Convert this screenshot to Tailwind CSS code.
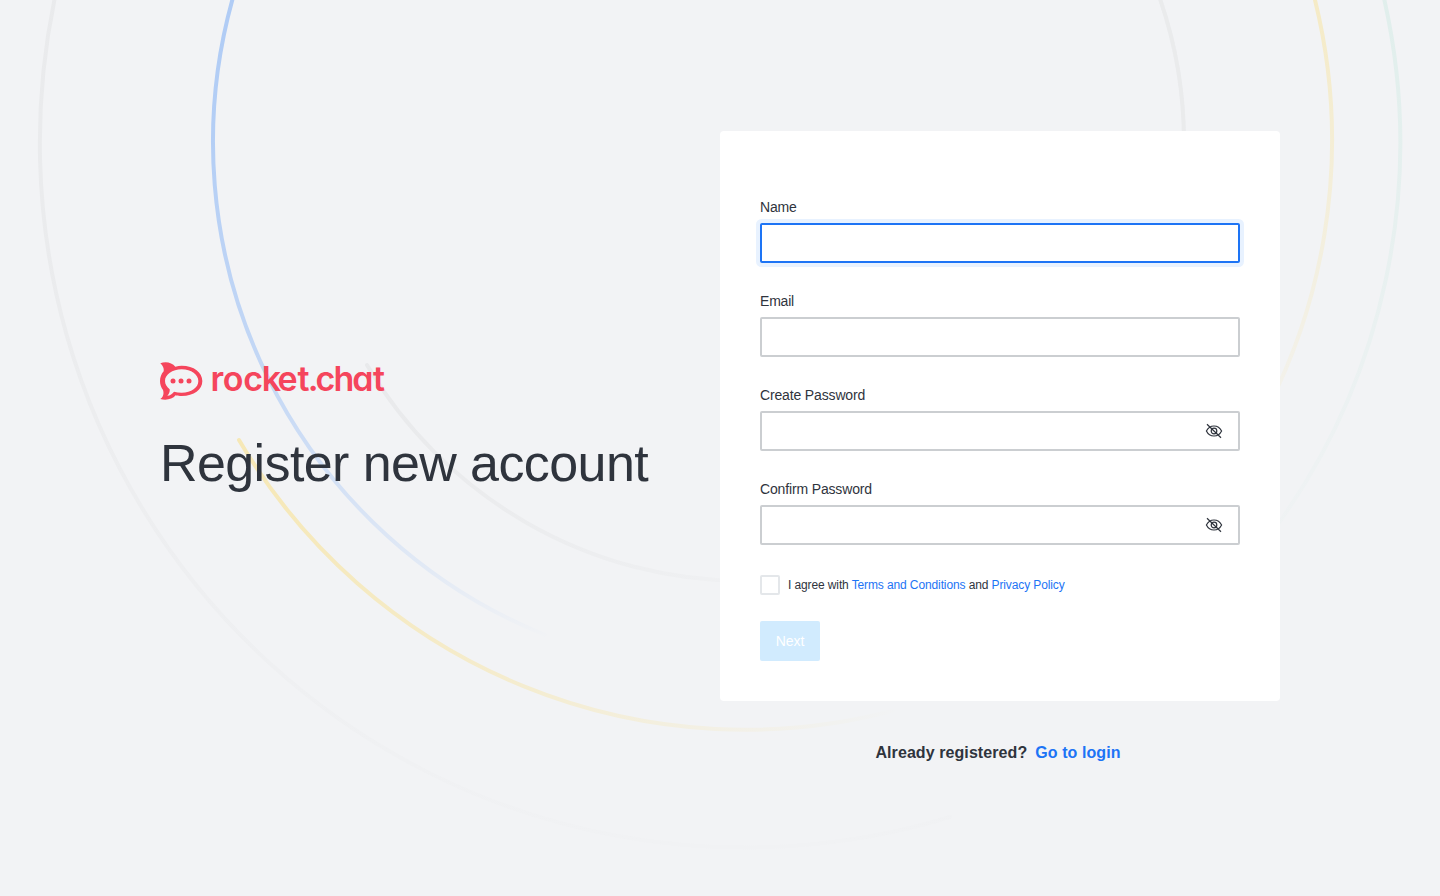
<!DOCTYPE html>
<html lang="en">
<head>
<meta charset="utf-8">
<title>Register new account</title>
<script src="https://cdn.jsdelivr.net/npm/@tailwindcss/browser@4"></script>
</head>
<body class="relative h-[896px] w-[1440px] overflow-hidden bg-[#f2f3f5] font-['Nimbus_Sans','Helvetica','Liberation_Sans',sans-serif] text-[#2f343d]">
<svg class="absolute inset-0" width="1440" height="896" viewBox="0 0 1440 896" fill="none" stroke-width="4" stroke-linecap="round">
  <defs>
    <linearGradient id="outer" gradientUnits="userSpaceOnUse" x1="0" y1="0" x2="0" y2="860"><stop stop-color="#9e9e9e" stop-opacity=".1"/><stop offset=".3" stop-color="#9e9e9e" stop-opacity=".09"/><stop offset="1" stop-color="#9e9e9e" stop-opacity=".01"/></linearGradient>
    <linearGradient id="blue" gradientUnits="userSpaceOnUse" x1="0" y1="0" x2="0" y2="640"><stop stop-color="#1d74f5" stop-opacity=".31"/><stop offset=".22" stop-color="#1d74f5" stop-opacity=".29"/><stop offset=".57" stop-color="#1d74f5" stop-opacity=".22"/><stop offset=".7" stop-color="#1d74f5" stop-opacity=".17"/><stop offset=".88" stop-color="#1d74f5" stop-opacity=".08"/><stop offset="1" stop-color="#1d74f5" stop-opacity="0"/></linearGradient>
    <linearGradient id="yellowLeft" gradientUnits="userSpaceOnUse" x1="239" y1="0" x2="900" y2="0"><stop stop-color="#ffd031" stop-opacity=".32"/><stop offset=".4" stop-color="#ffd031" stop-opacity=".2"/><stop offset=".75" stop-color="#ffd031" stop-opacity=".07"/><stop offset="1" stop-color="#ffd031" stop-opacity="0"/></linearGradient>
    <linearGradient id="yellowRight" gradientUnits="userSpaceOnUse" x1="0" y1="0" x2="0" y2="440"><stop stop-color="#ffd031" stop-opacity=".24"/><stop offset=".4" stop-color="#ffd031" stop-opacity=".145"/><stop offset="1" stop-color="#ffd031" stop-opacity=".03"/></linearGradient>
    <linearGradient id="green" gradientUnits="userSpaceOnUse" x1="0" y1="0" x2="0" y2="540"><stop stop-color="#2dc08f" stop-opacity=".09"/><stop offset=".8" stop-color="#2dc08f" stop-opacity=".025"/><stop offset="1" stop-color="#2dc08f" stop-opacity=".01"/></linearGradient>
    <linearGradient id="inner" gradientUnits="userSpaceOnUse" x1="367" y1="0" x2="820" y2="0"><stop stop-color="#9e9e9e" stop-opacity=".11"/><stop offset="1" stop-color="#9e9e9e" stop-opacity=".01"/></linearGradient>
  </defs>
  <path d="M54.4 0A705 705 0 0 0 950 817" stroke="url(#outer)"/>
  <path d="M232.3 0A532 532 0 0 0 545 635" stroke="url(#blue)"/>
  <path d="M239 440A587.5 587.5 0 0 0 900 709" stroke="url(#yellowLeft)"/>
  <path d="M1315 0A587.5 587.5 0 0 1 1240 456" stroke="url(#yellowRight)"/>
  <path d="M1384.4 0A655 655 0 0 1 1270 535" stroke="url(#green)"/>
  <path d="M367 365A439 439 0 0 0 745 581" stroke="url(#inner)"/>
  <path d="M1160.4 0A439 439 0 0 1 1184 142" stroke="#9e9e9e" stroke-opacity=".09"/>
</svg>
<main class="relative flex h-full items-start px-40">
  <section class="w-[560px] pt-[362px]">
    <div class="flex h-[38px] items-start">
      <svg width="43" height="38" viewBox="30 36 129 114" fill="#f5455c">
        <path fill-rule="evenodd" d="M31 40C46 33 66 37 76 50C83 48 89 47 95 47C132 47 157 67 157 93C157 119 132 138 95 138C89 138 83 138 77 136C67 148 48 152 31 147C41 139 42 129 39 120C33 113 30 103 30 93C30 82 34 72 41 64C42 56 40 48 31 40ZM95 58C67 58 45 74 45 93C45 103 51 111 59 118C60 126 57 132 52 137C60 137 67 131 72 125C79 127 87 128 95 128C124 128 145 113 145 93C145 74 124 58 95 58Z"/>
        <circle cx="69" cy="93" r="7.500"/><circle cx="93" cy="93" r="7.500"/><circle cx="117" cy="93" r="7.500"/>
      </svg>
      <svg class="ml-[7px] overflow-visible" width="176" height="38" viewBox="0 0 176 38"><text class="font-[Inter,Lato,sans-serif] [font-feature-settings:'cv11']" x="0.6 12.8 33.3 51.7 67.4 87.6 97.7 105.600 123.4 142.3 163" y="28.600" font-size="34" font-weight="600" fill="#f5455c">rocket.chat</text></svg>
    </div>
    <h1 class="mt-[32px] text-[52px] leading-[62px] tracking-[-0.6px] whitespace-nowrap">Register new account</h1>
  </section>
  <section class="w-[560px] pt-[131px]">
    <form class="h-[570px] rounded bg-white px-10 pt-[66px] text-sm leading-5">
      <div class="flex flex-col gap-7">
        <label class="flex flex-col gap-1.5"><span class="tracking-[-0.15px]">Name</span><span class="h-10 rounded-xs border-2 border-[#1d74f5] shadow-[0_0_0_4px_#e8f2ff]"></span></label>
        <label class="flex flex-col gap-1.5"><span class="tracking-[-0.2px]">Email</span><span class="h-10 rounded-xs border-2 border-[#cbced1]"></span></label>
        <label class="flex flex-col gap-1.5"><span class="tracking-[-0.15px]">Create Password</span><span class="flex h-10 items-center justify-end rounded-xs border-2 border-[#cbced1] pr-3.5">
          <svg width="20" height="20" viewBox="0 0 20 20" fill="none" stroke="#2f343d" stroke-width="1.200"><path d="M2.400 10C4 6.800 6.800 5 10 5S16 6.800 17.600 10C16 13.200 13.200 15 10 15S4 13.200 2.400 10ZM3 3.300L17 16.700"/><circle cx="10" cy="10" r="2.800"/></svg></span></label>
        <label class="flex flex-col gap-1.5"><span class="tracking-[-0.15px]">Confirm Password</span><span class="flex h-10 items-center justify-end rounded-xs border-2 border-[#cbced1] pr-3.5">
          <svg width="20" height="20" viewBox="0 0 20 20" fill="none" stroke="#2f343d" stroke-width="1.200"><path d="M2.400 10C4 6.800 6.800 5 10 5S16 6.800 17.600 10C16 13.200 13.200 15 10 15S4 13.200 2.400 10ZM3 3.300L17 16.700"/><circle cx="10" cy="10" r="2.800"/></svg></span></label>
      </div>
      <div class="mt-[30px] flex items-center gap-2 text-xs leading-5 tracking-[-0.115px] whitespace-nowrap">
        <span class="size-5 rounded-xs border-2 border-[#e4e7ea]"></span>
        <span>I agree with <a class="text-[#1d74f5]">Terms and Conditions</a> and <a class="text-[#1d74f5]">Privacy Policy</a></span>
      </div>
      <button type="button" class="mt-[26px] flex h-10 w-[60px] items-center justify-center rounded-xs bg-[#d1ebfe] tracking-[-0.1px] text-white">Next</button>
    </form>
    <p class="mt-[40px] pr-1 text-center text-base leading-6 font-bold tracking-[0.08px]">Already registered?<a class="ml-2 text-[#1d74f5]">Go to login</a></p>
  </section>
</main>
</body>
</html>
